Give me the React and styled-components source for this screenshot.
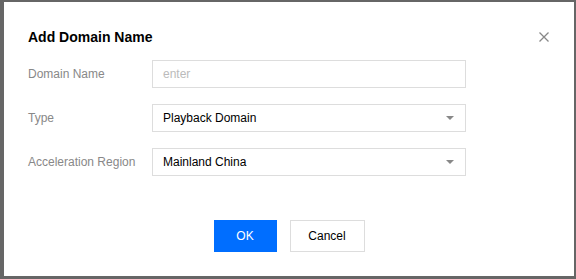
import React from 'react';
import styled, { createGlobalStyle } from 'styled-components';

const GlobalStyle = createGlobalStyle`
  html, body {
    margin: 0;
    padding: 0;
    background: #666;
  }
  body {
    font-family: "Liberation Sans", Arial, sans-serif;
  }
`;

const fields = [
  { label: 'Domain Name', placeholder: 'enter' },
  { label: 'Type', value: 'Playback Domain', select: true },
  { label: 'Acceleration Region', value: 'Mainland China', select: true },
];

const App = () => {
  return (
    <Backdrop>
      <GlobalStyle />
      <Dialog>
        <Header>
          <Title>Add Domain Name</Title>
          <Close aria-label="close">
            <svg width="10" height="10" viewBox="0 0 10 10">
              <path d="M0.5 0.5 L9.5 9.5 M9.5 0.5 L0.5 9.5" stroke="#888" strokeWidth="1.3" fill="none" />
            </svg>
          </Close>
        </Header>
        <Form>
          {fields.map((f) => (
            <Row key={f.label}>
              <Label>{f.label}</Label>
              <Field $placeholder={!f.value}>
                <span>{f.value || f.placeholder}</span>
                {f.select && <Caret />}
              </Field>
            </Row>
          ))}
        </Form>
        <Footer>
          <Button $primary>OK</Button>
          <Button>Cancel</Button>
        </Footer>
      </Dialog>
    </Backdrop>
  );
};

const Backdrop = styled.div`
  width: 576px;
  height: 279px;
  box-sizing: border-box;
  padding: 2px 2px 3px 4px;
  background: #666;
`;

const Dialog = styled.div`
  width: 570px;
  height: 274px;
  box-sizing: border-box;
  background: #fff;
  padding: 25px 24px 24px;
  display: flex;
  flex-direction: column;
`;

const Header = styled.div`
  display: flex;
  align-items: center;
  justify-content: space-between;
  height: 20px;
  padding-right: 1px;
`;

const Title = styled.h2`
  margin: 0;
  font-size: 14px;
  font-weight: bold;
  color: #000;
  line-height: 20px;
`;

const Close = styled.button`
  border: none;
  background: none;
  padding: 0;
  width: 10px;
  height: 10px;
  display: flex;
  cursor: pointer;
`;

const Form = styled.div`
  margin-top: 13px;
  display: flex;
  flex-direction: column;
  gap: 16px;
`;

const Row = styled.div`
  display: flex;
  align-items: center;
  height: 28px;
`;

const Label = styled.div`
  width: 124px;
  font-size: 12px;
  color: #888;
`;

const Field = styled.div`
  width: 314px;
  height: 28px;
  box-sizing: border-box;
  border: 1px solid #ddd;
  padding: 0 11px 0 10px;
  display: flex;
  align-items: center;
  justify-content: space-between;
  font-size: 12px;
  color: ${(p) => (p.$placeholder ? '#bbb' : '#000')};
`;

const Caret = styled.span`
  width: 0;
  height: 0;
  border-left: 4px solid transparent;
  border-right: 4px solid transparent;
  border-top: 4px solid #888;
`;

const Footer = styled.div`
  margin-top: auto;
  display: flex;
  justify-content: center;
  gap: 13px;
`;

const Button = styled.button`
  height: 32px;
  width: ${(p) => (p.$primary ? '63px' : '75px')};
  box-sizing: border-box;
  padding: 0;
  font-family: inherit;
  font-size: 12px;
  background: ${(p) => (p.$primary ? '#006eff' : '#fff')};
  color: ${(p) => (p.$primary ? '#fff' : '#000')};
  border: 1px solid ${(p) => (p.$primary ? '#006eff' : '#ddd')};
  cursor: pointer;
`;

export default App;
